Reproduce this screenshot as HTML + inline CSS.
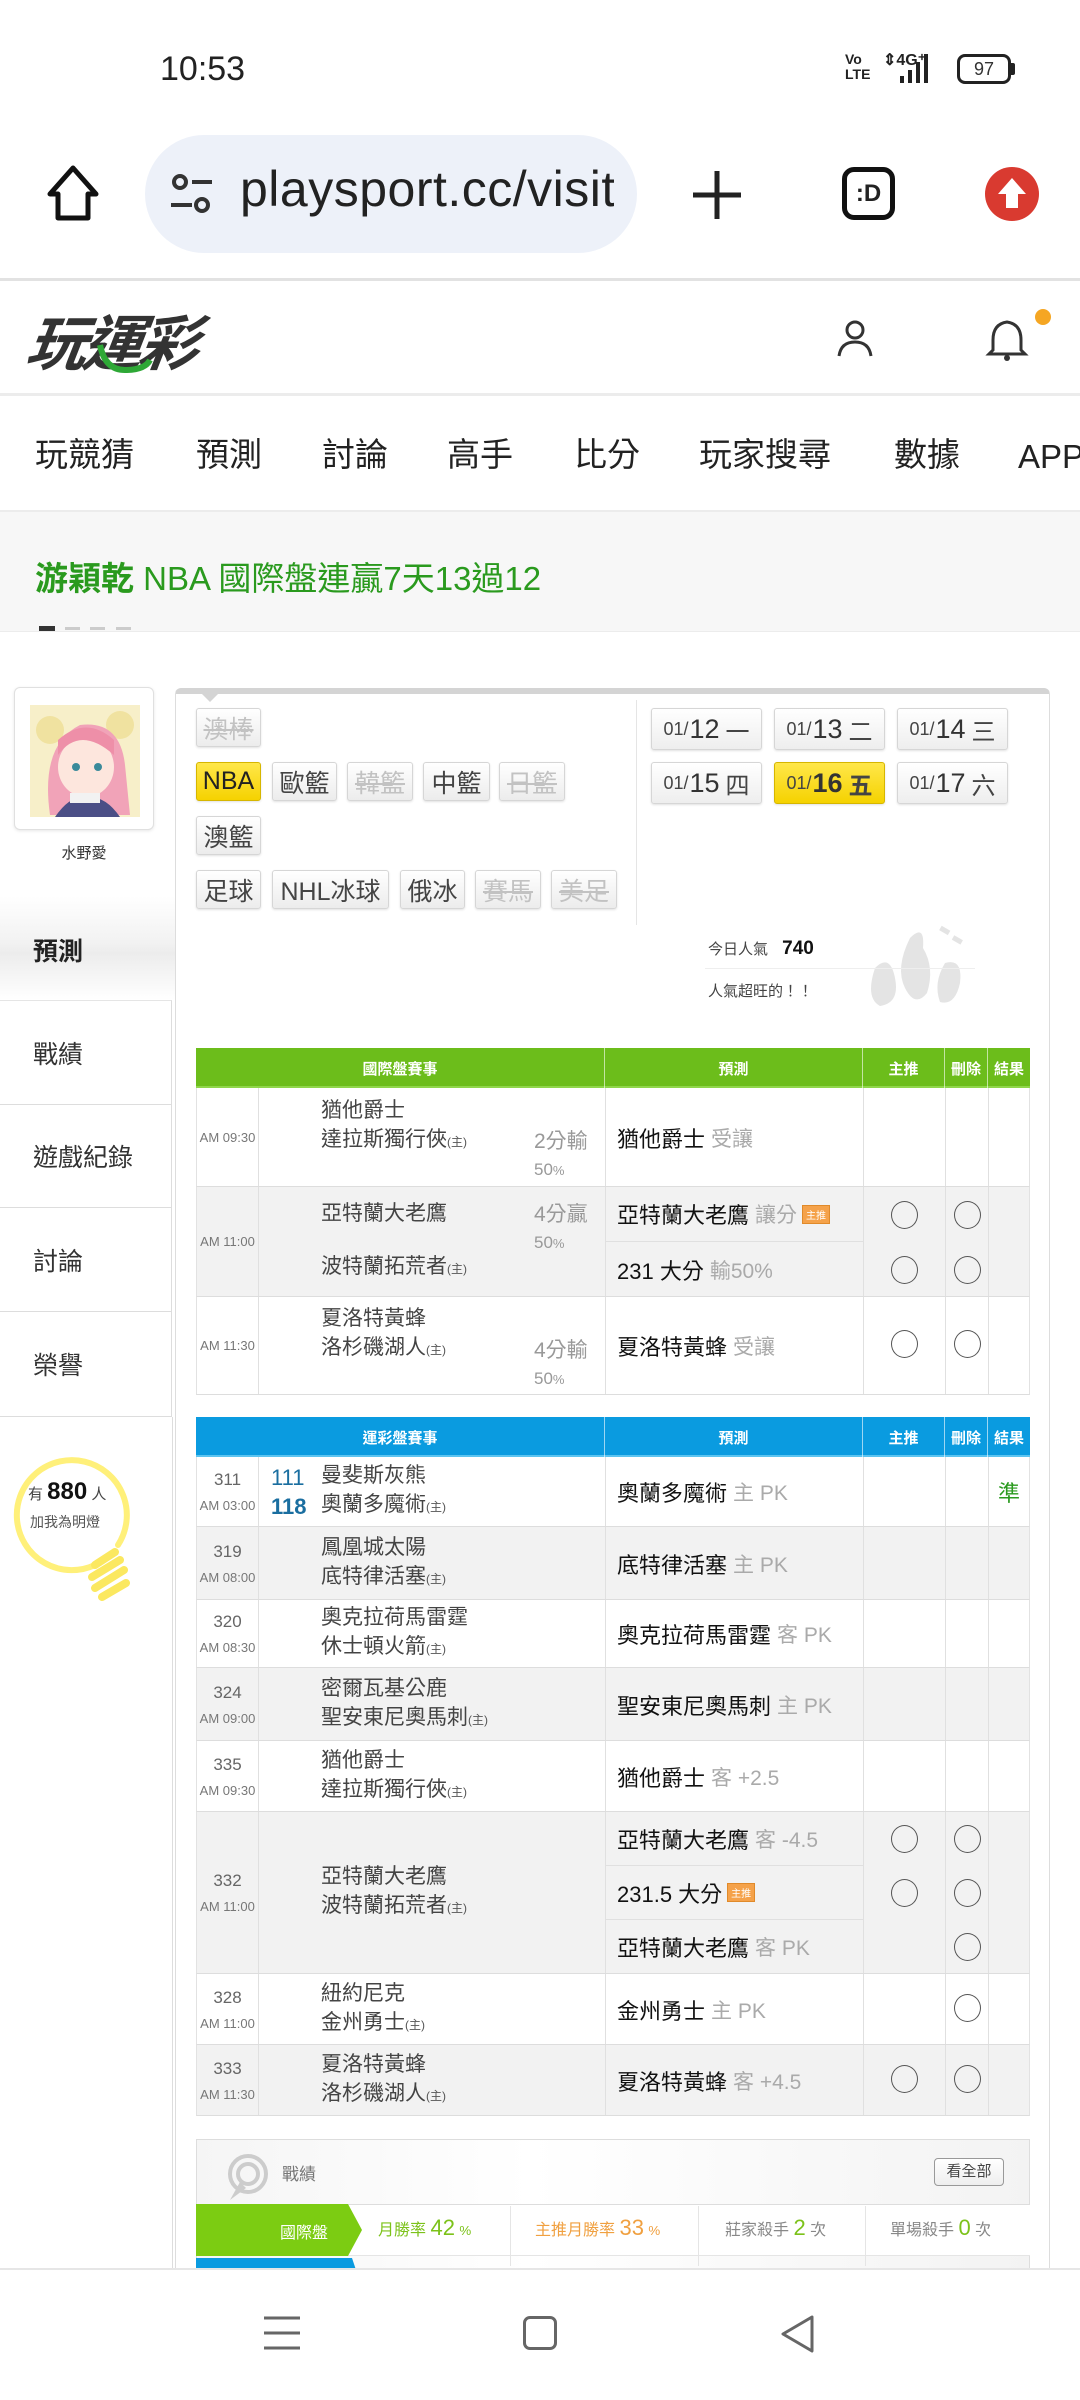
<!DOCTYPE html>
<html><head><meta charset="utf-8">
<style>
*{margin:0;padding:0;box-sizing:border-box}
body{width:1080px;height:2400px;position:relative;background:#fff;font-family:"Liberation Sans","Noto Sans CJK TC",sans-serif;color:#222;overflow:hidden}
.a{position:absolute}
.nav span{position:absolute;top:430px;font-size:33px;color:#222;line-height:50px}
.btn{position:absolute;height:39px;border:1px solid #d6d6d6;border-radius:3px;background:linear-gradient(#fff,#ececec);font-size:25px;color:#444;display:flex;align-items:center;justify-content:center;box-shadow:0 1px 2px rgba(0,0,0,.12)}
.btn.f{color:#c2c2c2;text-decoration:line-through}
.btn.y{background:linear-gradient(#ffe74a,#f5d200);border-color:#d6b600;color:#222}
.dbtn{position:absolute;width:111px;height:42px;border:1px solid #d6d6d6;border-radius:3px;background:linear-gradient(#fff,#eee);font-size:24px;color:#444;display:flex;align-items:center;justify-content:center;box-shadow:0 1px 2px rgba(0,0,0,.12)}
.dbtn b{font-size:27px;font-weight:normal;margin:0 6px 0 1px;color:#333}
.dbtn small{font-size:18px}
.dbtn.y{background:linear-gradient(#ffe74a,#f5d200);border-color:#d6b600}
.menu{position:absolute;left:0;width:172px;border-right:1px solid #ddd;border-bottom:1px solid #ddd;font-size:25px;color:#333;padding-left:33px;display:flex;align-items:center}
.hdr{position:absolute;left:196px;width:834px;height:40px;color:#fff;font-size:15px;font-weight:bold}
.hdr div{position:absolute;top:0;height:40px;display:flex;align-items:center;justify-content:center;border-right:1px solid rgba(255,255,255,.6)}
.row{position:absolute;left:196px;width:834px;border-bottom:1px solid #ddd;border-left:1px solid #e2e2e2;border-right:1px solid #e2e2e2}
.row.g{background:#f2f2f2}
.c{position:absolute;top:0;height:100%;border-right:1px solid #e0e0e0}
.tm{left:0;width:62px;display:flex;flex-direction:column;align-items:center;justify-content:center;color:#777;font-size:13px}
.tm .n{font-size:17px;color:#666;margin-bottom:8px}
.tn{left:62px;width:347px;display:flex;flex-direction:column;justify-content:center;padding-left:62px;font-size:21px;color:#444;line-height:29px}
.tn sub{font-size:12px;vertical-align:baseline;color:#555}
.pr{left:409px;width:258px}
.pr div{position:absolute;left:0;width:100%;display:flex;align-items:center;padding-left:11px;font-size:22px;color:#111;border-bottom:1px solid #e0e0e0}
.pr i{font-style:normal;color:#aaa;margin-left:6px;font-size:21px}
.mt{left:667px;width:82px}.dl{left:749px;width:43px}.rs{left:792px;width:40px;border-right:none}
.o{position:absolute;width:27px;height:28px;border:1.6px solid #555;border-radius:50%}
.tag{display:inline-block;background:#f5a24a;color:#fff;font-size:10px;padding:1px 3px;margin-left:5px;border:1px solid #e08a2a}
.hc{position:absolute;left:533px;font-size:21px;color:#999;line-height:27px}
.hc small{font-size:13px}
.bl{color:#1a6ea0;font-size:22px;position:absolute;left:74px}
</style></head><body>

<div class="a" style="left:160px;top:50px;font-size:34px;color:#222">10:53</div>
<div class="a" style="left:845px;top:52px;font-size:14px;font-weight:bold;line-height:15px;color:#222">Vo<br>LTE</div>
<div class="a" style="left:883px;top:50px;font-size:16px;font-weight:bold;color:#222">⇕4G⁺</div>
<svg class="a" style="left:880px;top:48px" width="50" height="38"><rect x="20" y="28" width="4" height="7" fill="#222"/><rect x="28" y="22" width="4" height="13" fill="#222"/><rect x="36" y="14" width="4" height="21" fill="#222"/><rect x="44" y="6" width="4" height="29" fill="#222"/></svg>
<div class="a" style="left:957px;top:54px;width:54px;height:30px;border:3px solid #222;border-radius:8px;font-size:18px;text-align:center;line-height:24px;color:#333">97</div>
<div class="a" style="left:1011px;top:63px;width:4px;height:12px;background:#222;border-radius:0 2px 2px 0"></div>

<svg class="a" style="left:42px;top:162px" width="62" height="62" viewBox="0 0 62 62"><path d="M31 6 L54 32 H46 V56 H16 V32 H8 Z" fill="none" stroke="#111" stroke-width="5" stroke-linejoin="round"/></svg>
<div class="a" style="left:145px;top:135px;width:492px;height:118px;border-radius:59px;background:#edf1f9"></div>
<svg class="a" style="left:168px;top:172px" width="48" height="44"><circle cx="12" cy="10" r="6" fill="none" stroke="#333" stroke-width="4"/><line x1="24" y1="10" x2="44" y2="10" stroke="#333" stroke-width="4"/><circle cx="34" cy="33" r="6" fill="none" stroke="#333" stroke-width="4"/><line x1="3" y1="33" x2="24" y2="33" stroke="#333" stroke-width="4"/></svg>
<div class="a" style="left:240px;top:160px;font-size:50px;color:#222;width:374px;overflow:hidden;white-space:nowrap;letter-spacing:0.5px">playsport.cc/visit</div>
<svg class="a" style="left:690px;top:168px" width="54" height="54"><line x1="27" y1="3" x2="27" y2="51" stroke="#222" stroke-width="5"/><line x1="3" y1="27" x2="51" y2="27" stroke="#222" stroke-width="5"/></svg>
<div class="a" style="left:842px;top:167px;width:53px;height:53px;border:5px solid #111;border-radius:12px;font-size:24px;font-weight:bold;display:flex;align-items:center;justify-content:center">:D</div>
<svg class="a" style="left:984px;top:166px" width="56" height="56"><circle cx="28" cy="28" r="27" fill="#d93a30"/><path d="M28 12 L42 28 H34 V42 H22 V28 H14 Z" fill="#fff"/></svg>
<div class="a" style="left:0;top:278px;width:1080px;height:3px;background:#e2e2e2"></div>

<div class="a" style="left:28px;top:296px;font-size:60px;font-weight:bold;font-style:italic;color:#333;letter-spacing:-4px;transform:skewX(-8deg)">玩運彩</div>
<svg class="a" style="left:90px;top:340px" width="70" height="40"><path d="M10 5 Q15 30 35 30 Q55 30 60 20" fill="none" stroke="#2ea836" stroke-width="6"/></svg>
<svg class="a" style="left:830px;top:318px" width="50" height="42"><circle cx="25" cy="12" r="8" fill="none" stroke="#333" stroke-width="3"/><path d="M9 38 Q11 24 25 24 Q39 24 41 38" fill="none" stroke="#333" stroke-width="3"/></svg>
<svg class="a" style="left:985px;top:318px" width="44" height="46"><path d="M22 4 Q8 6 8 22 V32 L4 36 H40 L36 32 V22 Q36 6 22 4 Z" fill="none" stroke="#333" stroke-width="3"/><circle cx="22" cy="40" r="3" fill="#333"/></svg>
<div class="a" style="left:1035px;top:309px;width:16px;height:16px;border-radius:50%;background:#f5a623"></div>
<div class="a" style="left:0;top:393px;width:1080px;height:3px;background:#ececec"></div>

<div class="nav">
<span style="left:35px">玩競猜</span><span style="left:196px">預測</span><span style="left:322px">討論</span><span style="left:447px">高手</span><span style="left:574px">比分</span><span style="left:699px">玩家搜尋</span><span style="left:894px">數據</span><span style="left:1018px;top:432px">APP</span>
</div>
<div class="a" style="left:0;top:510px;width:1080px;height:122px;background:#f7f7f7;border-top:2px solid #ececec;border-bottom:1px solid #ececec"></div>
<div class="a" style="left:35px;top:552px;font-size:33px;color:#2a9a1e"><b>游穎乾</b> NBA 國際盤連贏7天13過12</div>
<div class="a" style="left:39px;top:626px;width:16px;height:5px;background:#333"></div>
<div class="a" style="left:65px;top:627px;width:15px;height:3px;background:#ccc"></div>
<div class="a" style="left:90px;top:627px;width:15px;height:3px;background:#ccc"></div>
<div class="a" style="left:116px;top:627px;width:15px;height:3px;background:#ccc"></div>

<div class="a" style="left:14px;top:687px;width:140px;height:143px;border:1px solid #e0e0e0;border-radius:6px;box-shadow:0 1px 3px rgba(0,0,0,.1);background:#fff"></div>
<svg class="a" style="left:30px;top:705px" width="110" height="112"><rect width="110" height="112" fill="#f7efc9"/><circle cx="20" cy="25" r="14" fill="#f0e2a0"/><circle cx="90" cy="20" r="14" fill="#f0e2a0"/><path d="M20 110 Q10 40 50 20 Q90 15 95 60 L100 110 Z" fill="#f1a3b8"/><ellipse cx="56" cy="62" rx="28" ry="30" fill="#fde6dd"/><path d="M28 50 Q50 20 84 50 L84 35 Q56 10 28 35Z" fill="#ee8fa8"/><circle cx="46" cy="62" r="4" fill="#3a8a9a"/><circle cx="68" cy="62" r="4" fill="#3a8a9a"/><path d="M25 112 Q40 90 56 92 Q75 90 90 112Z" fill="#4b4f86"/><rect x="40" y="88" width="30" height="10" fill="#f2f2f2"/></svg>
<div class="a" style="left:14px;top:842px;width:140px;text-align:center;font-size:15px;color:#333">水野愛</div>

<div class="a" style="left:0;top:896px;width:178px;height:104px;background:linear-gradient(#fff 0%,#f2f2f2 45%,#ececec 55%,#fff 100%)"></div>
<div class="a" style="left:33px;top:932px;font-size:25px;font-weight:bold;color:#222">預測</div>
<div class="menu" style="top:1000px;height:105px;border-top:1px solid #e5e5e5">戰績</div>
<div class="menu" style="top:1105px;height:103px">遊戲紀錄</div>
<div class="menu" style="top:1208px;height:104px">討論</div>
<div class="menu" style="top:1312px;height:105px">榮譽</div>
<div class="a" style="left:172px;top:1417px;width:1px;height:851px;background:#ddd"></div>

<svg class="a" style="left:0;top:1440px" width="180" height="180"><path d="M95 125 A55 55 0 1 1 118 105" fill="none" stroke="#fff07a" stroke-width="6" stroke-linecap="round"/><g stroke="#fbe860" stroke-width="8" stroke-linecap="round"><line x1="95" y1="125" x2="115" y2="112"/><line x1="92" y1="137" x2="120" y2="120"/><line x1="95" y1="148" x2="124" y2="130"/><line x1="102" y1="157" x2="126" y2="143"/></g></svg>
<div class="a" style="left:28px;top:1478px;font-size:15px;color:#444">有 <b style="font-size:24px;color:#111">880</b> 人</div>
<div class="a" style="left:30px;top:1512px;font-size:14px;color:#555">加我為明燈</div>

<div class="a" style="left:175px;top:688px;width:875px;height:1590px;border:1px solid #ddd;border-top:6px solid #d4d4d4;border-radius:6px 6px 0 0;background:#fff"></div>
<div class="a" style="left:200px;top:692px;width:0;height:0;border-left:10px solid transparent;border-right:10px solid transparent;border-top:10px solid #d4d4d4"></div>

<div class="btn f" style="left:196px;top:708px;width:65px">澳棒</div>
<div class="btn y" style="left:196px;top:762px;width:65px">NBA</div>
<div class="btn" style="left:272px;top:762px;width:65px">歐籃</div>
<div class="btn f" style="left:347px;top:762px;width:66px">韓籃</div>
<div class="btn" style="left:423px;top:762px;width:67px">中籃</div>
<div class="btn f" style="left:499px;top:762px;width:66px">日籃</div>
<div class="btn" style="left:196px;top:816px;width:65px">澳籃</div>
<div class="btn" style="left:196px;top:870px;width:65px">足球</div>
<div class="btn" style="left:272px;top:870px;width:117px">NHL冰球</div>
<div class="btn" style="left:400px;top:870px;width:65px">俄冰</div>
<div class="btn f" style="left:475px;top:870px;width:66px">賽馬</div>
<div class="btn f" style="left:551px;top:870px;width:66px">美足</div>
<div class="a" style="left:636px;top:700px;width:1px;height:225px;background:#e5e5e5"></div>

<div class="dbtn" style="left:651px;top:708px"><small>01/</small><b>12</b>一</div>
<div class="dbtn" style="left:774px;top:708px"><small>01/</small><b>13</b>二</div>
<div class="dbtn" style="left:897px;top:708px"><small>01/</small><b>14</b>三</div>
<div class="dbtn" style="left:651px;top:762px"><small>01/</small><b>15</b>四</div>
<div class="dbtn y" style="left:774px;top:762px"><small>01/</small><b style="font-weight:bold">16</b><span style="font-weight:bold">五</span></div>
<div class="dbtn" style="left:897px;top:762px"><small>01/</small><b>17</b>六</div>

<svg class="a" style="left:855px;top:918px" width="130" height="95"><g fill="#e4e4e4"><path d="M55 20 Q70 5 68 30 Q80 50 72 75 Q60 90 50 70 Q40 50 55 20Z"/><path d="M20 50 Q35 35 40 60 Q45 85 25 88 Q10 80 20 50Z"/><path d="M90 45 Q108 40 105 65 Q100 88 85 84 Q78 65 90 45Z"/><rect x="85" y="10" width="10" height="5" transform="rotate(30 90 12)"/><rect x="98" y="18" width="10" height="5" transform="rotate(30 100 20)"/></g></svg>
<div class="a" style="left:708px;top:938px;font-size:15px;color:#444">今日人氣 <b style="font-size:19px;color:#111;margin-left:10px">740</b></div>
<div class="a" style="left:705px;top:968px;width:270px;height:1px;background:#eee"></div>
<div class="a" style="left:708px;top:980px;font-size:15px;color:#444">人氣超旺的！！</div>

<div class="hdr" style="top:1048px;background:#6cbd1b;border-bottom:2px solid #8fd64a">
<div style="left:0;width:409px">國際盤賽事</div><div style="left:409px;width:258px">預測</div><div style="left:667px;width:82px">主推</div><div style="left:749px;width:43px">刪除</div><div style="left:792px;width:42px;border:none">結果</div></div>

<div class="row" style="top:1088px;height:99px">
<div class="c tm">AM 09:30</div>
<div class="c tn" style="justify-content:flex-start;padding-top:8px"><span>猶他爵士</span><span>達拉斯獨行俠<sub>(主)</sub></span></div>
<div class="hc" style="top:40px;left:337px">2分輸<br><small style="font-size:17px">50<small>%</small></small></div>
<div class="c pr"><div style="top:0;height:99px;border:none">猶他爵士<i>受讓</i></div></div>
<div class="c mt"></div><div class="c dl"></div><div class="c rs"></div></div>

<div class="row g" style="top:1187px;height:110px">
<div class="c tm">AM 11:00</div>
<div class="c tn" style="justify-content:space-between;padding:12px 0 12px 62px"><span>亞特蘭大老鷹</span><span>波特蘭拓荒者<sub>(主)</sub></span></div>
<div class="hc" style="top:14px;left:337px">4分贏<br><small style="font-size:17px">50<small>%</small></small></div>
<div class="c pr"><div style="top:0;height:55px">亞特蘭大老鷹<i>讓分</i><span class="tag">主推</span></div><div style="top:55px;height:55px;border:none">231 大分<i>輸50%</i></div></div>
<div class="c mt"><span class="o" style="left:27px;top:14px"></span><span class="o" style="left:27px;top:69px"></span></div><div class="c dl"><span class="o" style="left:8px;top:14px"></span><span class="o" style="left:8px;top:69px"></span></div><div class="c rs"></div></div>

<div class="row" style="top:1297px;height:98px">
<div class="c tm">AM 11:30</div>
<div class="c tn" style="justify-content:flex-start;padding-top:7px"><span>夏洛特黃蜂</span><span>洛杉磯湖人<sub>(主)</sub></span></div>
<div class="hc" style="top:40px;left:337px">4分輸<br><small style="font-size:17px">50<small>%</small></small></div>
<div class="c pr"><div style="top:0;height:98px;border:none">夏洛特黃蜂<i>受讓</i></div></div>
<div class="c mt"><span class="o" style="left:27px;top:33px"></span></div><div class="c dl"><span class="o" style="left:8px;top:33px"></span></div><div class="c rs"></div></div>

<div class="hdr" style="top:1417px;background:#0a9be0;border-bottom:2px solid #5cc4f0">
<div style="left:0;width:409px">運彩盤賽事</div><div style="left:409px;width:258px">預測</div><div style="left:667px;width:82px">主推</div><div style="left:749px;width:43px">刪除</div><div style="left:792px;width:42px;border:none">結果</div></div>

<div class="row" style="top:1457px;height:70px">
<div class="c tm"><span class="n">311</span>AM 03:00</div>
<div class="c tn"><span>曼斐斯灰熊</span><span>奧蘭多魔術<sub>(主)</sub></span></div>
<span class="bl" style="top:8px;left:74px">111</span><span class="bl" style="top:37px;left:74px;font-weight:bold">118</span>
<div class="c pr"><div style="top:0;height:70px;border:none">奧蘭多魔術<i>主 PK</i></div></div>
<div class="c mt"></div><div class="c dl"></div><div class="c rs" style="display:flex;align-items:center;justify-content:center;color:#2a9a1e;font-size:22px">準</div></div>

<div class="row g" style="top:1527px;height:73px">
<div class="c tm"><span class="n">319</span>AM 08:00</div>
<div class="c tn"><span>鳳凰城太陽</span><span>底特律活塞<sub>(主)</sub></span></div>
<div class="c pr"><div style="top:0;height:73px;border:none">底特律活塞<i>主 PK</i></div></div>
<div class="c mt"></div><div class="c dl"></div><div class="c rs"></div></div>

<div class="row" style="top:1600px;height:68px">
<div class="c tm"><span class="n">320</span>AM 08:30</div>
<div class="c tn"><span>奧克拉荷馬雷霆</span><span>休士頓火箭<sub>(主)</sub></span></div>
<div class="c pr"><div style="top:0;height:68px;border:none">奧克拉荷馬雷霆<i>客 PK</i></div></div>
<div class="c mt"></div><div class="c dl"></div><div class="c rs"></div></div>

<div class="row g" style="top:1668px;height:73px">
<div class="c tm"><span class="n">324</span>AM 09:00</div>
<div class="c tn"><span>密爾瓦基公鹿</span><span>聖安東尼奧馬刺<sub>(主)</sub></span></div>
<div class="c pr"><div style="top:0;height:73px;border:none">聖安東尼奧馬刺<i>主 PK</i></div></div>
<div class="c mt"></div><div class="c dl"></div><div class="c rs"></div></div>

<div class="row" style="top:1741px;height:71px">
<div class="c tm"><span class="n">335</span>AM 09:30</div>
<div class="c tn"><span>猶他爵士</span><span>達拉斯獨行俠<sub>(主)</sub></span></div>
<div class="c pr"><div style="top:0;height:71px;border:none">猶他爵士<i>客 +2.5</i></div></div>
<div class="c mt"></div><div class="c dl"></div><div class="c rs"></div></div>

<div class="row g" style="top:1812px;height:162px">
<div class="c tm"><span class="n">332</span>AM 11:00</div>
<div class="c tn"><span>亞特蘭大老鷹</span><span>波特蘭拓荒者<sub>(主)</sub></span></div>
<div class="c pr"><div style="top:0;height:54px">亞特蘭大老鷹<i>客 -4.5</i></div><div style="top:54px;height:54px">231.5 大分<span class="tag">主推</span></div><div style="top:108px;height:54px;border:none">亞特蘭大老鷹<i>客 PK</i></div></div>
<div class="c mt"><span class="o" style="left:27px;top:13px"></span><span class="o" style="left:27px;top:67px"></span></div><div class="c dl"><span class="o" style="left:8px;top:13px"></span><span class="o" style="left:8px;top:67px"></span><span class="o" style="left:8px;top:121px"></span></div><div class="c rs"></div></div>

<div class="row" style="top:1974px;height:71px">
<div class="c tm"><span class="n">328</span>AM 11:00</div>
<div class="c tn"><span>紐約尼克</span><span>金州勇士<sub>(主)</sub></span></div>
<div class="c pr"><div style="top:0;height:71px;border:none">金州勇士<i>主 PK</i></div></div>
<div class="c mt"></div><div class="c dl"><span class="o" style="left:8px;top:20px"></span></div><div class="c rs"></div></div>

<div class="row g" style="top:2045px;height:71px">
<div class="c tm"><span class="n">333</span>AM 11:30</div>
<div class="c tn"><span>夏洛特黃蜂</span><span>洛杉磯湖人<sub>(主)</sub></span></div>
<div class="c pr"><div style="top:0;height:71px;border:none">夏洛特黃蜂<i>客 +4.5</i></div></div>
<div class="c mt"><span class="o" style="left:27px;top:20px"></span></div><div class="c dl"><span class="o" style="left:8px;top:20px"></span></div><div class="c rs"></div></div>

<div class="a" style="left:196px;top:2139px;width:834px;height:140px;border:1px solid #ddd;background:linear-gradient(90deg,#f5f5f5,#fff 40%,#f3f3f3)"></div>
<svg class="a" style="left:222px;top:2152px" width="48" height="50"><g fill="none" stroke="#ccc" stroke-width="4"><circle cx="26" cy="22" r="18"/><circle cx="26" cy="22" r="10"/></g><path d="M8 48 L18 30 L24 36 Z" fill="#ccc"/></svg>
<div class="a" style="left:282px;top:2160px;font-size:17px;color:#777">戰績</div>
<div class="a" style="left:934px;top:2158px;width:70px;height:28px;border:1px solid #999;border-radius:4px;background:linear-gradient(#fff,#eee);font-size:15px;color:#444;text-align:center;line-height:26px">看全部</div>
<div class="a" style="left:196px;top:2204px;width:834px;height:52px;background:#fff;border-top:1px solid #ddd;border-bottom:1px solid #e5e5e5"></div>
<svg class="a" style="left:196px;top:2204px" width="170" height="52"><path d="M0 0 H152 L166 26 L152 52 H0Z" fill="#7ccc12"/></svg>
<div class="a" style="left:280px;top:2219px;font-size:16px;color:#fff">國際盤</div>
<div class="a" style="left:378px;top:2215px;font-size:16px;color:#7cc21a">月勝率 <span style="font-size:22px">42</span> <small>%</small></div>
<div class="a" style="left:535px;top:2215px;font-size:16px;color:#f0a040">主推月勝率 <span style="font-size:22px">33</span> <small>%</small></div>
<div class="a" style="left:725px;top:2215px;font-size:16px;color:#888">莊家殺手 <span style="font-size:22px;color:#7cc21a">2</span> 次</div>
<div class="a" style="left:890px;top:2215px;font-size:16px;color:#888">單場殺手 <span style="font-size:22px;color:#7cc21a">0</span> 次</div>
<div class="a" style="left:510px;top:2206px;width:1px;height:60px;background:#e5e5e5"></div>
<div class="a" style="left:698px;top:2206px;width:1px;height:60px;background:#e5e5e5"></div>
<div class="a" style="left:865px;top:2206px;width:1px;height:60px;background:#e5e5e5"></div>
<svg class="a" style="left:196px;top:2258px" width="160" height="12"><path d="M0 0 H156 L160 12 H0Z" fill="#0a9be0"/></svg>

<div class="a" style="left:0;top:2268px;width:1080px;height:132px;background:#fff;border-top:2px solid #e6e6e6"></div>
<svg class="a" style="left:262px;top:2314px" width="40" height="38"><g stroke="#666" stroke-width="3"><line x1="2" y1="4" x2="38" y2="4"/><line x1="2" y1="19" x2="38" y2="19"/><line x1="2" y1="34" x2="38" y2="34"/></g></svg>
<div class="a" style="left:523px;top:2316px;width:34px;height:34px;border:3px solid #666;border-radius:7px"></div>
<svg class="a" style="left:778px;top:2314px" width="40" height="40"><path d="M34 3 L5 20 L34 37 Z" fill="none" stroke="#666" stroke-width="3" stroke-linejoin="round"/></svg>
</body></html>
